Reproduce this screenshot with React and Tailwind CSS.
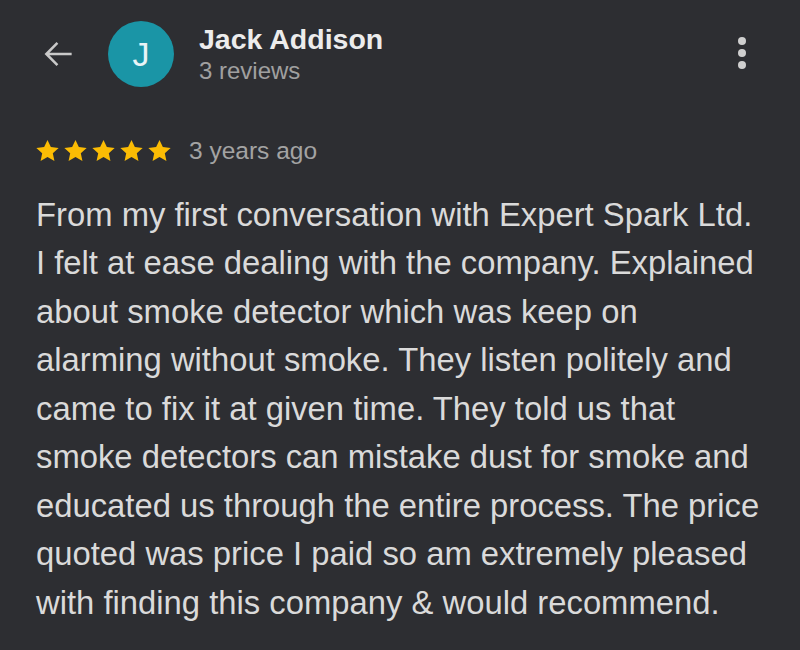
import React from 'react';

const lines = [
  'From my first conversation with Expert Spark Ltd.',
  'I felt at ease dealing with the company. Explained',
  'about smoke detector which was keep on',
  'alarming without smoke. They listen politely and',
  'came to fix it at given time. They told us that',
  'smoke detectors can mistake dust for smoke and',
  'educated us through the entire process. The price',
  'quoted was price I paid so am extremely pleased',
  'with finding this company & would recommend.',
];

const Star = () => (
  <svg width="27" height="26" viewBox="0 0 24 24" className="shrink-0">
    <path
      d="M12 1.8l3.1 6.6 7.2.8-5.4 4.9 1.5 7.1L12 17.6l-6.4 3.6 1.5-7.1L1.7 9.2l7.2-.8z"
      fill="#fbbc04"
    />
  </svg>
);

export default function App() {
  return (
    <div
      className="w-[800px] h-[650px] overflow-hidden bg-[#2d2e32] text-[#dcdcdc]"
      style={{ fontFamily: '"Liberation Sans", Arial, sans-serif' }}
    >
      {/* Header */}
      <div className="flex items-center pt-[21px] pl-[40px] pr-[54px]">
        <svg width="38" height="38" viewBox="0 0 24 24" fill="none" stroke="#c9c9c9" strokeWidth="1.6" className="shrink-0">
          <path d="M20 12H4.5M11 5l-7 7 7 7" />
        </svg>
        <div className="ml-[30px] w-[66px] h-[66px] rounded-full bg-[#1a95a6] flex items-center justify-center text-[34px] text-[#e8f4f6] shrink-0">
          J
        </div>
        <div className="ml-[25px] flex flex-col mt-[0px]">
          <span className="text-[28.5px] font-bold text-[#ececec] leading-[34px]">Jack Addison</span>
          <span className="text-[24px] text-[#a0a0a0] leading-[30px]">3 reviews</span>
        </div>
        <div className="ml-auto flex flex-col gap-[4px] -mt-[2px]">
          <div className="w-[8px] h-[8px] rounded-full bg-[#cfcfcf]" />
          <div className="w-[8px] h-[8px] rounded-full bg-[#cfcfcf]" />
          <div className="w-[8px] h-[8px] rounded-full bg-[#cfcfcf]" />
        </div>
      </div>

      {/* Rating */}
      <div className="flex items-center pl-[34px] mt-[46px]">
        <div className="flex gap-[1px]">
          <Star /><Star /><Star /><Star /><Star />
        </div>
        <span className="ml-[16px] text-[24.5px] text-[#a3a3a3]">3 years ago</span>
      </div>

      {/* Body */}
      <div className="pl-[36px] mt-[21px] text-[32.8px] leading-[48.5px] text-[#dadada]">
        {lines.map((l) => (
          <div key={l} className="whitespace-nowrap">{l}</div>
        ))}
      </div>
    </div>
  );
}
